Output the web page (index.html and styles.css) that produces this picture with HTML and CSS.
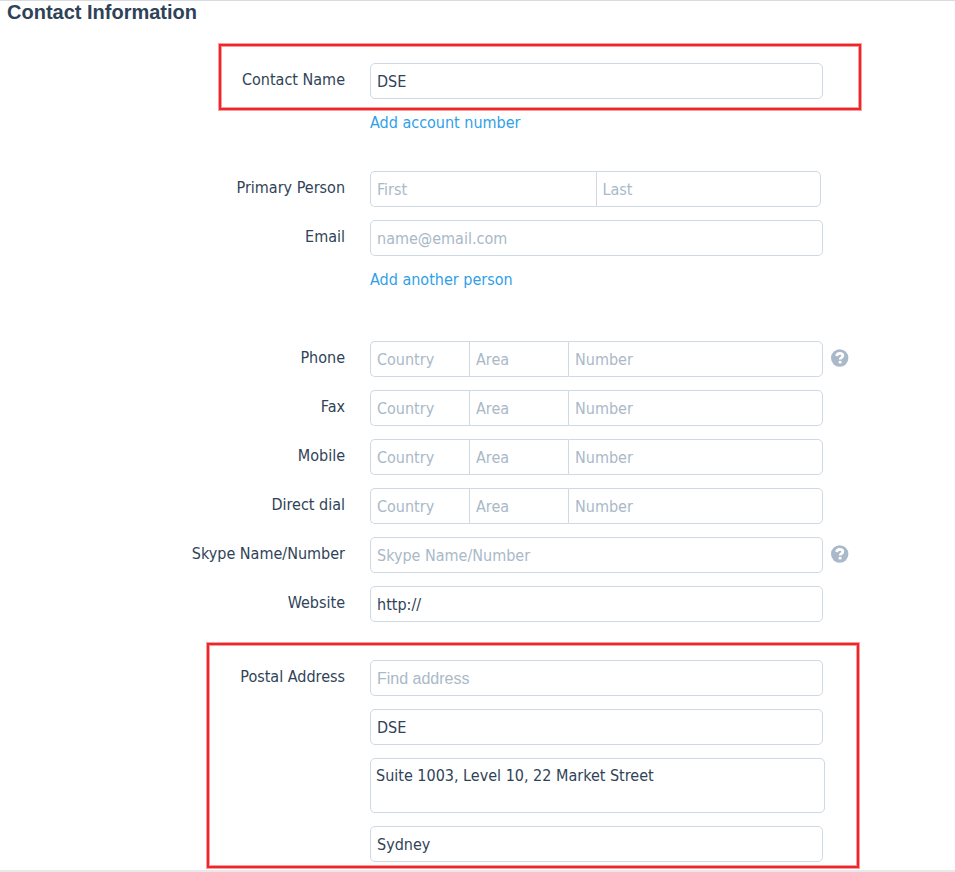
FILE: index.html
```html
<!DOCTYPE html>
<html lang="en">
<head>
<meta charset="utf-8">
<title>Contact Information</title>
<link rel="stylesheet" href="styles.css">
</head>
<body>
<form class="page">
  <h1 class="title">Contact Information</h1>

  <section class="group group-name marked">
    <div class="row">
      <label class="label" for="contact-name">Contact Name</label>
      <input class="field" id="contact-name" type="text" value="DSE">
    </div>
  </section>
  <div class="row row-link"><a class="link" href="#account">Add account number</a></div>

  <section class="group group-person">
    <div class="row">
      <label class="label" for="first">Primary Person</label>
      <div class="split split-name">
        <input class="field" id="first" type="text" placeholder="First">
        <input class="field" type="text" placeholder="Last" aria-label="Last">
      </div>
    </div>
    <div class="row">
      <label class="label" for="email">Email</label>
      <input class="field" id="email" type="email" placeholder="name@email.com">
    </div>
    <div class="row row-link"><a class="link" href="#person">Add another person</a></div>
  </section>

  <section class="group group-phone">
    <div class="row">
      <label class="label" for="phone">Phone</label>
      <div class="split split-phone">
        <input class="field" id="phone" type="text" placeholder="Country">
        <input class="field" type="text" placeholder="Area" aria-label="Phone area">
        <input class="field" type="text" placeholder="Number" aria-label="Phone number">
      </div>
      <button class="help" type="button" aria-label="Phone help">
        <svg viewBox="0 0 18 18" width="18" height="18"><circle cx="8.700" cy="9" r="8.700" fill="#a9b9c9"/><path d="M5.700 7.100C5.800 5.200 7 4.300 8.800 4.300c1.800 0 3 .9 3 2.400 0 2-2.700 2-2.700 3.900" fill="none" stroke="#fff" stroke-width="2.700"/><path d="M7.700 11.900h2.800v2.500H7.700z" fill="#fff"/></svg>
      </button>
    </div>
    <div class="row">
      <label class="label" for="fax">Fax</label>
      <div class="split split-phone">
        <input class="field" id="fax" type="text" placeholder="Country">
        <input class="field" type="text" placeholder="Area" aria-label="Fax area">
        <input class="field" type="text" placeholder="Number" aria-label="Fax number">
      </div>
    </div>
    <div class="row">
      <label class="label" for="mobile">Mobile</label>
      <div class="split split-phone">
        <input class="field" id="mobile" type="text" placeholder="Country">
        <input class="field" type="text" placeholder="Area" aria-label="Mobile area">
        <input class="field" type="text" placeholder="Number" aria-label="Mobile number">
      </div>
    </div>
    <div class="row">
      <label class="label" for="direct">Direct dial</label>
      <div class="split split-phone">
        <input class="field" id="direct" type="text" placeholder="Country">
        <input class="field" type="text" placeholder="Area" aria-label="Direct dial area">
        <input class="field" type="text" placeholder="Number" aria-label="Direct dial number">
      </div>
    </div>
    <div class="row">
      <label class="label" for="skype">Skype Name/Number</label>
      <input class="field" id="skype" type="text" placeholder="Skype Name/Number">
      <button class="help" type="button" aria-label="Skype help">
        <svg viewBox="0 0 18 18" width="18" height="18"><circle cx="8.700" cy="9" r="8.700" fill="#a9b9c9"/><path d="M5.700 7.100C5.800 5.200 7 4.300 8.800 4.300c1.800 0 3 .9 3 2.400 0 2-2.700 2-2.700 3.900" fill="none" stroke="#fff" stroke-width="2.700"/><path d="M7.700 11.900h2.800v2.500H7.700z" fill="#fff"/></svg>
      </button>
    </div>
    <div class="row">
      <label class="label" for="website">Website</label>
      <input class="field" id="website" type="text" value="http://">
    </div>
  </section>

  <section class="group group-address marked">
    <div class="row">
      <label class="label" for="find">Postal Address</label>
      <input class="field field-find" id="find" type="text" placeholder="Find address">
    </div>
    <div class="row"><input class="field" type="text" value="DSE" aria-label="Attention"></div>
    <div class="row"><textarea class="field field-street" aria-label="Street address">Suite 1003, Level 10, 22 Market Street</textarea></div>
    <div class="row"><input class="field" type="text" value="Sydney" aria-label="City"></div>
  </section>
</form>
</body>
</html>
```
FILE: styles.css
```css
* {
  box-sizing: border-box;
}

body {
  margin: 0;
  background: #fff;
  color: #2f4358;
  font: 16px/20px "DejaVu Sans Condensed", "Noto Sans", sans-serif;
}

.page {
  min-height: 100vh;
  border-top: 1px solid #d9dbe0;
  border-bottom: 2px solid #e9e9e9;
}

.title {
  margin: 0 7px;
  font: bold 20px/22px "Liberation Sans", Arial, sans-serif;
}

.group {
  display: grid;
  gap: 13px;
}

.row {
  display: grid;
  grid-template-columns: 370fr 453fr 132fr;
  align-items: start;
}

.label {
  grid-column: 1;
  padding: 7px 25px 0 0;
  text-align: right;
}

.row > .field,
.split,
.link {
  grid-column: 2;
}

.field {
  width: 100%;
  min-width: 0;
  height: 36px;
  margin: 0;
  padding: 1px 6px 0;
  border: 1px solid #cfd9e3;
  border-radius: 5px;
  background: #fff;
  color: inherit;
  font: inherit;
}

.field::placeholder {
  color: #a9b9c8;
  opacity: 1;
}

.field-find {
  font-family: "Liberation Sans", Arial, sans-serif;
}

.field-street {
  display: block;
  width: calc(100% + 2px);
  height: 55px;
  padding: 7px 5px;
  resize: none;
}

.split {
  display: grid;
}

.split-name {
  grid-template-columns: 1fr 1fr;
  margin-right: 2px;
}

.split-phone {
  grid-template-columns: 99fr 99fr 255fr;
}

.split .field:not(:last-child) {
  border-right: 0;
  border-top-right-radius: 0;
  border-bottom-right-radius: 0;
}

.split .field:not(:first-child) {
  border-top-left-radius: 0;
  border-bottom-left-radius: 0;
}

.link {
  color: #2f9fe8;
  text-decoration: none;
}

.help {
  display: flex;
  grid-column: 3;
  width: 18px;
  margin: 8px 0 0 8px;
  padding: 0;
  border: 0;
  background: none;
}

.group-name {
  margin-top: 21px;
  padding: 19px 0 11px;
}

.group-name + .row-link {
  margin-top: 3px;
}

.group-person {
  margin-top: 38px;
}

.group-person .row-link {
  margin-top: 1px;
}

.group-phone {
  margin-top: 51px;
}

.group-address {
  margin-top: 21px;
  padding: 17px 0 6px;
}

.marked {
  position: relative;
}

.marked::after {
  position: absolute;
  inset: 0 94px 0 219px;
  border: 2px solid #ee2529;
  box-shadow: 0 0 0 1px #f79da0, inset 0 0 0 1px #f79da0;
  content: "";
  pointer-events: none;
}

.group-address::after {
  right: 96px;
  left: 207px;
}
```
